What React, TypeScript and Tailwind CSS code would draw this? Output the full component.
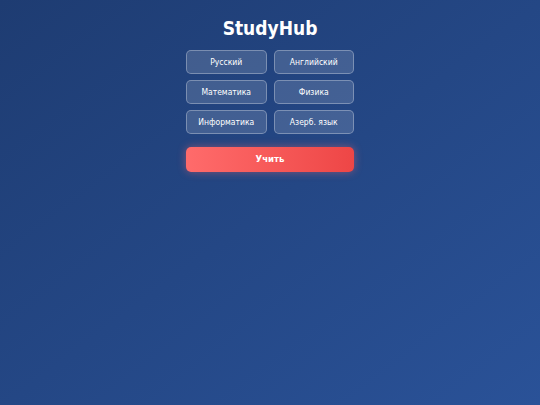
import React from "react";

const subjects = ["Русский", "Английский", "Математика", "Физика", "Информатика", "Азерб. язык"];

export default function App() {
  return (
    <div
      className="w-[540px] h-[405px] bg-gradient-to-br from-[#1e3c72] to-[#2a5298] flex flex-col items-center pt-[16px] font-stretch-condensed"
      style={{ fontFamily: '"DejaVu Sans Condensed", "DejaVu Sans", sans-serif' }}
    >
      <h1 className="text-white font-bold text-[19px] leading-[24px]">StudyHub</h1>
      <div className="mt-[10px] w-[168px] grid grid-cols-2 gap-x-[7px] gap-y-[6px]">
        {subjects.map((s) => (
          <button
            key={s}
            className="h-[24px] rounded-[5px] border border-white/30 bg-white/15 text-white text-[8.5px] font-normal flex items-center justify-center"
          >
            {s}
          </button>
        ))}
      </div>
      <button className="mt-[13px] w-[168px] h-[25px] rounded-[5px] bg-gradient-to-r from-[#ff6b6b] to-[#ee4646] text-white font-bold text-[9.5px] shadow-[0_0_8px_rgba(255,107,107,0.45)]">
        Учить
      </button>
    </div>
  );
}
